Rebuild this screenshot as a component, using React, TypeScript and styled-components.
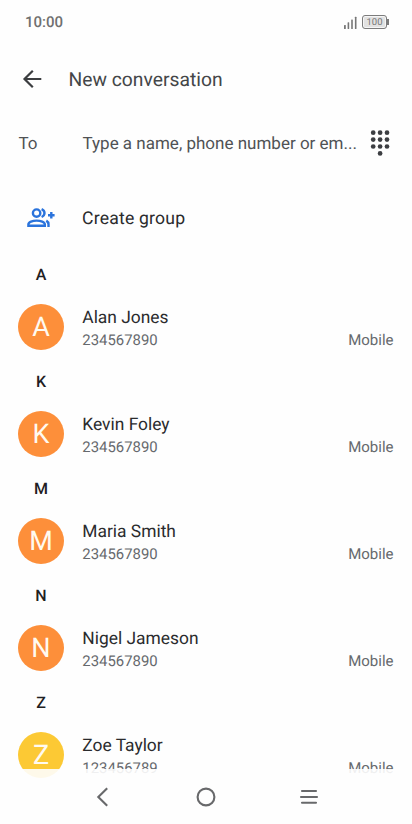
import React from "react";
import styled, { createGlobalStyle } from "styled-components";

const GlobalStyle = createGlobalStyle`
  * { box-sizing: border-box; }
  body { margin: 0; background: #fefefe; font-family: Roboto, "Liberation Sans", sans-serif; text-rendering: geometricPrecision; }
`;

const Screen = styled.div`
  width: 412px;
  height: 824px;
  position: relative;
  overflow: hidden;
  background: #fefefe;
  display: flex;
  flex-direction: column;
`;

const StatusBar = styled.div`
  flex: none;
  height: 44px;
  padding: 0 24px 0 25px;
  display: flex;
  align-items: center;
  justify-content: space-between;
`;

const Clock = styled.span`
  font-size: 15px;
  font-weight: 500;
  line-height: 20px;
  color: #707070;
`;

const StatusIcons = styled.div`
  display: flex;
  align-items: center;
  gap: 5px;
  height: 20px;
`;

const Battery = styled.div`
  display: flex;
  align-items: center;
  margin-top: -1px;
`;

const BatteryBody = styled.div`
  width: 25px;
  height: 14px;
  border: 1px solid #7c7c7c;
  border-radius: 3px;
  background: #e2e2e2;
  box-shadow: inset 0 0 0 1px #f6f6f6;
  font-size: 9.5px;
  line-height: 13px;
  text-align: center;
  color: #777;
`;

const BatteryTip = styled.div`
  width: 2px;
  height: 6px;
  margin-right: -1px;
  background: #7c7c7c;
`;

const AppBar = styled.header`
  flex: none;
  height: 70px;
  padding-left: 20px;
  display: flex;
  align-items: center;
  gap: 24.5px;
`;

const Title = styled.h1`
  margin: 0;
  font-size: 19.3px;
  font-weight: 400;
  line-height: 26px;
  padding-top: 1px;
  color: #444648;
`;

const Recipient = styled.div`
  flex: none;
  height: 58px;
  padding: 0 19px 0 18.5px;
  display: flex;
  align-items: center;
  color: #505255;
  line-height: 24px;
`;

const ToLabel = styled.label`
  flex: none;
  width: 64px;
  padding-top: 2px;
  font-size: 17px;
`;

const Placeholder = styled.span`
  flex: 1;
  min-width: 0;
  padding-top: 2px;
  font-size: 17px;
  white-space: nowrap;
`;

const CreateGroup = styled.div`
  flex: none;
  height: 78px;
  padding: 14px 0 0 26px;
  display: flex;
  align-items: center;
  gap: 26px;
`;

const ActionText = styled.span`
  padding-top: 2px;
  font-size: 17.6px;
  line-height: 24px;
  letter-spacing: 0.2px;
  color: #2a2b2d;
`;

const Section = styled.section`
  flex: none;
  height: 107px;
`;

const Letter = styled.h2`
  margin: 0;
  height: 48px;
  width: 46px;
  margin-left: 18px;
  font-size: 16px;
  font-weight: 500;
  line-height: 49px;
  text-align: center;
  color: #1f2022;
`;

const Row = styled.div`
  height: 59px;
  padding: 6px 18.5px 0 18px;
  display: flex;
`;

const Avatar = styled.div<{ $color: string }>`
  width: 46px;
  height: 46px;
  border-radius: 50%;
  margin-right: 18.3px;
  background: ${(p) => p.$color};
  color: #fffaf0;
  font-size: 27px;
  line-height: 47px;
  text-align: center;
`;

const Details = styled.div`
  flex: 1;
  padding-top: 2px;
`;

const Name = styled.div`
  font-size: 17.4px;
  line-height: 24px;
  color: #2a2b2d;
`;

const Phone = styled.div`
  font-size: 14.9px;
  line-height: 20px;
  color: #66696d;
`;

const Kind = styled.div`
  margin-top: 26px;
  font-size: 15px;
  line-height: 20px;
  color: #66696d;
`;

const NavBar = styled.nav`
  position: absolute;
  left: 0;
  right: 0;
  bottom: 0;
  height: 55px;
  padding: 0 91px 0 90px;
  display: flex;
  align-items: center;
  justify-content: space-between;
  background: rgba(254, 254, 254, 0.9);
`;

const people = [
  { name: "Alan Jones", phone: "234567890", color: "#fd8f3a" },
  { name: "Kevin Foley", phone: "234567890", color: "#fd8f3a" },
  { name: "Maria Smith", phone: "234567890", color: "#fd8f3a" },
  { name: "Nigel Jameson", phone: "234567890", color: "#fd8f3a" },
  { name: "Zoe Taylor", phone: "123456789", color: "#fcc934" },
];

const SignalIcon = () => (
  <svg width="13" height="13" viewBox="0 0 13 13" fill="#777">
    <rect x="0" y="9" width="1.8" height="4" rx="0.5" />
    <rect x="3.6" y="6.2" width="1.6" height="6.8" rx="0.5" />
    <rect x="7.2" y="3.5" width="1.6" height="9.5" rx="0.5" />
    <rect x="10.9" y="0.8" width="1.6" height="12.2" rx="0.5" />
  </svg>
);

const BackArrow = () => (
  <svg width="24" height="24" viewBox="0 0 24 24" fill="none" stroke="#3c3e40" strokeWidth="2.2">
    <path d="M21.3 12H4.8M12.8 3.7L4.5 12l8.3 8.3" />
  </svg>
);

const DialpadIcon = () => (
  <svg width="24" height="28" viewBox="0 0 24 28" fill="#3c3e42">
    {[3.7, 10.6, 17.5].map((y) => [4.2, 11.1, 18].map((x) => <circle key={`${x}-${y}`} cx={x} cy={y} r="2.35" />))}
    <circle cx="11.1" cy="24.4" r="2.35" />
  </svg>
);

const GroupAddIcon = () => (
  <svg width="30" height="22" viewBox="0 0 30 22" fill="none" stroke="#2a73dc" strokeWidth="2.4">
    <circle cx="10.6" cy="6.1" r="3.7" />
    <path d="M2.4 18.7v-1.4c0-2.4 4.2-3.7 8.2-3.7s8.2 1.3 8.2 3.7v1.4z" />
    <path d="M15.6 2.2c1.9.8 2.9 2.2 2.9 3.9s-1 3.1-2.9 3.9M20.3 13.6c1.5.9 2.2 2.1 2.2 3.7v2.6M22 8.2h6.6M25.3 4.9v6.6" />
  </svg>
);

const NavBack = () => (
  <svg width="24" height="24" viewBox="0 0 24 24" fill="none" stroke="#68696b" strokeWidth="2.1">
    <path d="M17.2 3.2L8.3 12l8.9 8.8" />
  </svg>
);

const NavHome = () => (
  <svg width="24" height="24" viewBox="0 0 24 24" fill="none" stroke="#68696b" strokeWidth="2.1">
    <circle cx="12" cy="12" r="8.4" />
  </svg>
);

const NavMenu = () => (
  <svg width="24" height="24" viewBox="0 0 24 24" fill="none" stroke="#68696b" strokeWidth="2.1" strokeLinecap="round">
    <path d="M5 6h14M4 12h16M5 17.8h14" />
  </svg>
);

export default function App() {
  return (
    <Screen>
      <GlobalStyle />
      <StatusBar>
        <Clock>10:00</Clock>
        <StatusIcons>
          <SignalIcon />
          <Battery>
            <BatteryBody>100</BatteryBody>
            <BatteryTip />
          </Battery>
        </StatusIcons>
      </StatusBar>
      <AppBar>
        <BackArrow />
        <Title>New conversation</Title>
      </AppBar>
      <Recipient>
        <ToLabel>To</ToLabel>
        <Placeholder>Type a name, phone number or em...</Placeholder>
        <DialpadIcon />
      </Recipient>
      <CreateGroup>
        <GroupAddIcon />
        <ActionText>Create group</ActionText>
      </CreateGroup>
      {people.map((p) => (
        <Section key={p.name}>
          <Letter>{p.name[0]}</Letter>
          <Row>
            <Avatar $color={p.color}>{p.name[0]}</Avatar>
            <Details>
              <Name>{p.name}</Name>
              <Phone>{p.phone}</Phone>
            </Details>
            <Kind>Mobile</Kind>
          </Row>
        </Section>
      ))}
      <NavBar>
        <NavBack />
        <NavHome />
        <NavMenu />
      </NavBar>
    </Screen>
  );
}
